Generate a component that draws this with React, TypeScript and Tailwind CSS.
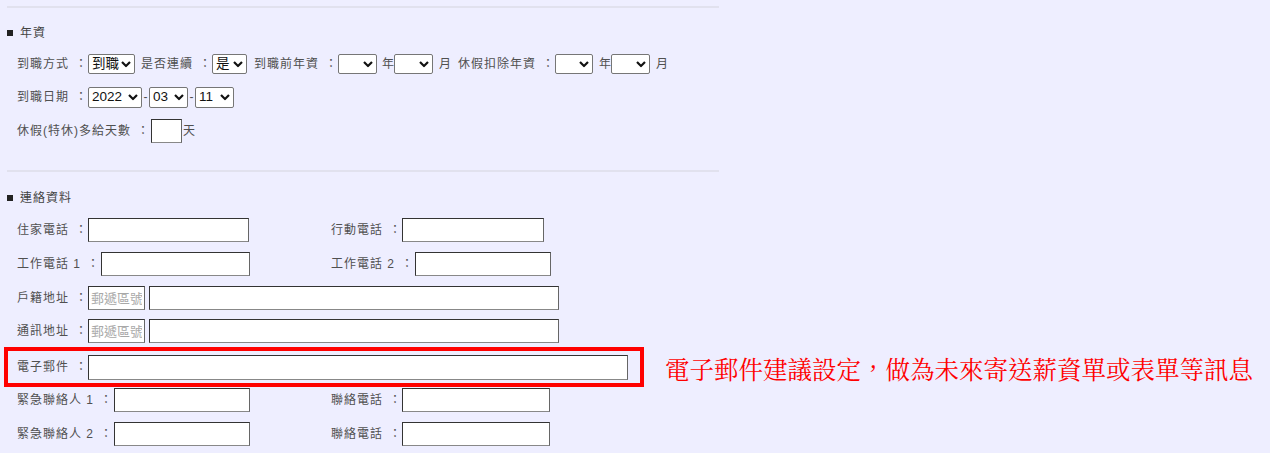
import type React from "react";

const font = "font-['Liberation_Sans','Noto_Sans_CJK_TC',sans-serif]";

const Label: React.FC<{ text: string; className: string }> = ({ text, className }) => (
	<span className={`inline-flex shrink-0 items-center whitespace-pre text-[12px] tracking-[1px] text-[#505050] ${className}`}>
		<span>{text}</span>
		<span className="ml-[6px]">：</span>
	</span>
);

const Chevron = () => (
	<svg
		width="10"
		height="7"
		viewBox="0 0 10 7"
		className="pointer-events-none absolute right-[4px] top-1/2 -translate-y-1/2"
	>
		<polyline points="1,1.5 5,5.5 9,1.5" fill="none" stroke="#111" strokeWidth="2.2" />
	</svg>
);

const Select: React.FC<{ className: string; value: string; options: string[] }> = ({
	className,
	value,
	options,
}) => (
	<span className={`relative inline-flex shrink-0 ${className}`}>
		<select
			defaultValue={value}
			className="h-full w-full appearance-none rounded-[2px] border border-[#767676] bg-white pl-[3px] text-[13.5px] leading-none text-[#111] outline-none"
		>
			{options.map((o) => (
				<option key={o} value={o}>
					{o}
				</option>
			))}
		</select>
		<Chevron />
	</span>
);

const Input: React.FC<{ className: string; placeholder?: string }> = ({ className, placeholder }) => (
	<input
		type="text"
		placeholder={placeholder}
		className={`shrink-0 border border-t-[#333] border-l-[#333] border-r-[#666] border-b-[#888] bg-white px-[2px] text-[13px] text-black outline-none placeholder:text-[#a8a8a8] ${className}`}
	/>
);

const Unit: React.FC<{ text: string; className?: string }> = ({ text, className = "" }) => (
	<span className={`shrink-0 text-[12px] text-[#505050] ${className}`}>{text}</span>
);

const SectionTitle: React.FC<{ text: string; className: string }> = ({ text, className }) => (
	<div className={`flex h-[20px] items-center pl-[7px] ${className}`}>
		<span className="h-[6px] w-[6px] bg-[#222]" />
		<span className="ml-[7px] text-[12px] tracking-[1px] text-[#444]">{text}</span>
	</div>
);

const years = ["", "0", "1", "2", "3", "4", "5", "6", "7", "8", "9", "10"];
const months = ["", "0", "1", "2", "3", "4", "5", "6", "7", "8", "9", "10", "11"];

export default function App() {
	return (
		<div className={`min-h-screen w-full overflow-hidden bg-[#eeeeff] ${font}`}>
			<div className="w-[1270px]">
				<div className="ml-[7px] mt-[6px] h-[2px] w-[712px] bg-[#e1e1ee]" />

				{/* 年資 */}
				<SectionTitle text="年資" className="mt-[15px]" />

				<div className="mt-[4px] flex h-[34px] items-center pl-[17px]">
					<Label text="到職方式" className="w-[71px]" />
					<Select className="h-[20px] w-[47px]" value="到職" options={["到職", "復職"]} />
					<Label text="是否連續" className="ml-[6px] w-[71px]" />
					<Select className="h-[20px] w-[35px]" value="是" options={["是", "否"]} />
					<Label text="到職前年資" className="ml-[7px] w-[84px]" />
					<Select className="h-[20px] w-[39px]" value="" options={years} />
					<Unit text="年" className="ml-[5px] w-[12px]" />
					<Select className="h-[20px] w-[39px]" value="" options={months} />
					<Unit text="月" className="ml-[6px]" />
					<Label text="休假扣除年資" className="ml-[7px] w-[97px]" />
					<Select className="h-[20px] w-[38px]" value="" options={years} />
					<Unit text="年" className="ml-[6px] w-[12px]" />
					<Select className="h-[20px] w-[39px]" value="" options={months} />
					<Unit text="月" className="ml-[6px]" />
				</div>

				<div className="flex h-[32px] items-center pl-[17px]">
					<Label text="到職日期" className="w-[71px]" />
					<Select className="h-[21px] w-[54px]" value="2022" options={["2021", "2022", "2023"]} />
					<Unit text="-" className="w-[7px] text-center" />
					<Select className="h-[21px] w-[39px]" value="03" options={["01", "02", "03", "04"]} />
					<Unit text="-" className="w-[7px] text-center" />
					<Select className="h-[21px] w-[39px]" value="11" options={["10", "11", "12"]} />
				</div>

				<div className="flex h-[35px] items-center pl-[17px]">
					<Label text="休假(特休)多給天數" className="w-[134px]" />
					<Input className="h-[24px] w-[31px]" />
					<Unit text="天" className="ml-[1px]" />
				</div>

				<div className="ml-[7px] mt-[22px] h-[2px] w-[712px] bg-[#e1e1ee]" />

				{/* 連絡資料 */}
				<SectionTitle text="連絡資料" className="mt-[16px]" />

				<div className="mt-[5px] flex h-[34px] items-center pl-[17px]">
					<div className="flex w-[314px] items-center">
						<Label text="住家電話" className="w-[71px]" />
						<Input className="h-[24px] w-[161px]" />
					</div>
					<Label text="行動電話" className="w-[71px]" />
					<Input className="h-[24px] w-[142px]" />
				</div>

				<div className="flex h-[34px] items-center pl-[17px]">
					<div className="flex w-[314px] items-center">
						<Label text="工作電話 1" className="w-[84px]" />
						<Input className="h-[24px] w-[149px]" />
					</div>
					<Label text="工作電話 2" className="w-[84px]" />
					<Input className="h-[24px] w-[136px]" />
				</div>

				<div className="flex h-[34px] items-center pl-[17px]">
					<Label text="戶籍地址" className="w-[71px]" />
					<Input className="h-[24px] w-[57px]" placeholder="郵遞區號" />
					<Input className="ml-[4px] h-[24px] w-[410px]" />
				</div>

				<div className="flex h-[32px] items-center pl-[17px]">
					<Label text="通訊地址" className="w-[71px]" />
					<Input className="h-[24px] w-[57px]" placeholder="郵遞區號" />
					<Input className="ml-[4px] h-[24px] w-[410px]" />
				</div>

				<div className="flex items-center">
					<div className="ml-[4px] flex h-[40px] w-[640px] shrink-0 items-center border-4 border-[#ff0000] pl-[9px]">
						<Label text="電子郵件" className="w-[71px]" />
						<Input className="h-[25px] w-[540px]" />
					</div>
					<p className="ml-[21px] whitespace-nowrap pt-[4px] font-['Noto_Serif_CJK_TC','Noto_Sans_CJK_TC',serif] text-[24.5px] leading-none text-[#ff0000]">
						電子郵件建議設定，做為未來寄送薪資單或表單等訊息
					</p>
				</div>

				<div className="flex h-[26px] items-center pl-[17px]">
					<div className="flex w-[314px] items-center">
						<Label text="緊急聯絡人 1" className="w-[97px]" />
						<Input className="h-[24px] w-[136px]" />
					</div>
					<Label text="聯絡電話" className="w-[71px]" />
					<Input className="h-[24px] w-[148px]" />
				</div>

				<div className="mt-[8px] flex h-[26px] items-center pl-[17px]">
					<div className="flex w-[314px] items-center">
						<Label text="緊急聯絡人 2" className="w-[97px]" />
						<Input className="h-[24px] w-[136px]" />
					</div>
					<Label text="聯絡電話" className="w-[71px]" />
					<Input className="h-[24px] w-[148px]" />
				</div>
			</div>
		</div>
	);
}
